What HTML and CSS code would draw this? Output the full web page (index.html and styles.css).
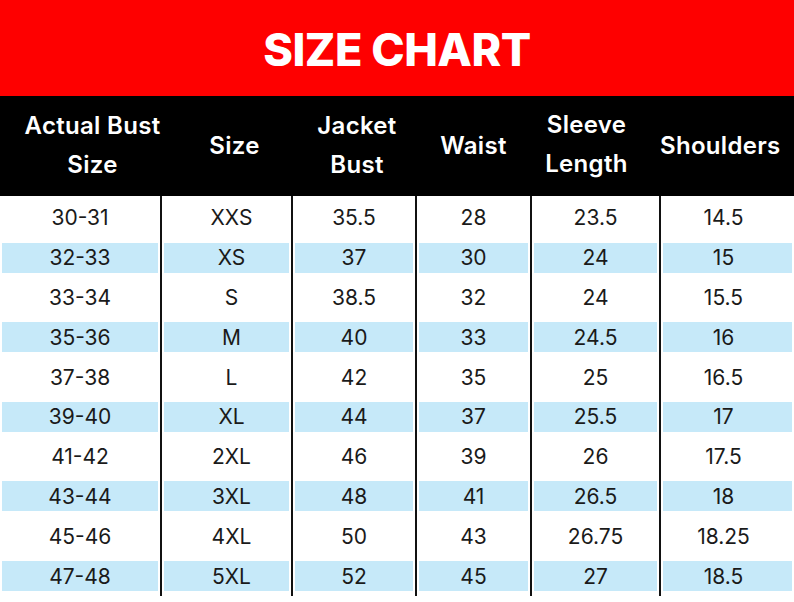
FILE: index.html
```html
<!DOCTYPE html>
<html lang="en">
<head>
<meta charset="utf-8">
<title>Size Chart</title>
<link rel="stylesheet" href="styles.css">
</head>
<body>
<div class="banner"><h1 class="title">SIZE CHART</h1></div>
<table class="chart">
  <colgroup>
    <col class="c1"><col class="c2"><col class="c3"><col class="c4"><col class="c5"><col class="c6">
  </colgroup>
  <thead>
    <tr>
      <th class="h1">Actual Bust<br>Size</th>
      <th class="h2">Size</th>
      <th class="h3">Jacket<br>Bust</th>
      <th class="h4">Waist</th>
      <th class="h5">Sleeve<br>Length</th>
      <th class="h6">Shoulders</th>
    </tr>
  </thead>
  <tbody>
    <tr class="first"><td>30-31</td><td>XXS</td><td>35.5</td><td>28</td><td>23.5</td><td>14.5</td></tr>
    <tr class="alt"><td>32-33</td><td>XS</td><td>37</td><td>30</td><td>24</td><td>15</td></tr>
    <tr><td>33-34</td><td>S</td><td>38.5</td><td>32</td><td>24</td><td>15.5</td></tr>
    <tr class="alt"><td>35-36</td><td>M</td><td>40</td><td>33</td><td>24.5</td><td>16</td></tr>
    <tr><td>37-38</td><td>L</td><td>42</td><td>35</td><td>25</td><td>16.5</td></tr>
    <tr class="alt"><td>39-40</td><td>XL</td><td>44</td><td>37</td><td>25.5</td><td>17</td></tr>
    <tr><td>41-42</td><td>2XL</td><td>46</td><td>39</td><td>26</td><td>17.5</td></tr>
    <tr class="alt"><td>43-44</td><td>3XL</td><td>48</td><td>41</td><td>26.5</td><td>18</td></tr>
    <tr><td>45-46</td><td>4XL</td><td>50</td><td>43</td><td>26.75</td><td>18.25</td></tr>
    <tr class="alt"><td>47-48</td><td>5XL</td><td>52</td><td>45</td><td>27</td><td>18.5</td></tr>
  </tbody>
</table>
</body>
</html>
```
FILE: styles.css
```css
html, body {
  margin: 0;
  padding: 0;
  background: #ffffff;
}
body {
  width: 794px;
  height: 602px;
  overflow: hidden;
  font-family: Inter, "Noto Sans", "DejaVu Sans", sans-serif;
}
.banner {
  height: 96px;
  background: #fe0000;
  display: flex;
  align-items: center;
  justify-content: center;
}
.title {
  margin: 0;
  color: #ffffff;
  font-size: 45px;
  font-weight: 800;
  letter-spacing: -0.5px;
  line-height: 1;
  padding-top: 2px;
}
.chart {
  width: 794px;
  border-collapse: collapse;
  table-layout: fixed;
}
.c1 { width: 161px; }
.c2 { width: 131px; }
.c3 { width: 124px; }
.c4 { width: 115px; }
.c5 { width: 129px; }
.c6 { width: 134px; }
.chart th {
  background: #000000;
  color: #ffffff;
  height: 100px;
  box-sizing: border-box;
  padding: 0 0 2px 0;
  font-size: 24px;
  font-weight: 600;
  letter-spacing: 0.3px;
  line-height: 39px;
  text-align: center;
  vertical-align: middle;
  white-space: nowrap;
}
.chart th.h1 { padding-left: 24px; }
.chart th.h2 { padding-left: 16px; }
.chart th.h3 { padding-left: 6px; }
.chart th.h5 { padding-right: 18px; padding-bottom: 5px; }
.chart th.h6 { padding-right: 14px; }
.chart td {
  height: 39.8px;
  box-sizing: border-box;
  padding: 0;
  font-size: 21px;
  font-weight: 400;
  color: #1a1a1a;
  text-align: center;
  vertical-align: middle;
  border-left: 2px solid #111111;
}
.chart tr.first td {
  height: 41.8px;
  padding-top: 2px;
}
.chart td:first-child {
  border-left: none;
}
.chart td:nth-child(2) { padding-left: 10px; }
.chart td:nth-child(6) { padding-right: 8px; }
.chart tr.alt td {
  background: linear-gradient(#c6e9f9, #c6e9f9) center / calc(100% - 4px) 30px no-repeat;
}
```
